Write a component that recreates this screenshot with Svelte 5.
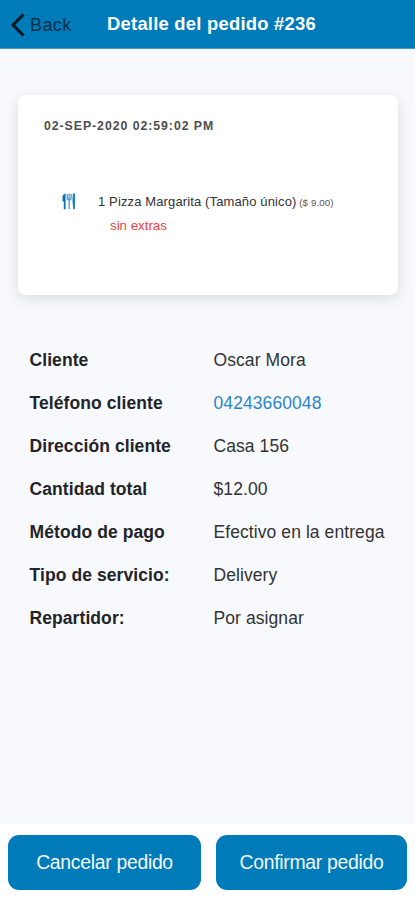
<script lang="ts">
  interface Row {
    label: string;
    value: string;
    href?: string;
  }

  const rows: Row[] = [
    { label: 'Cliente', value: 'Oscar Mora' },
    { label: 'Teléfono cliente', value: '04243660048', href: 'tel:04243660048' },
    { label: 'Dirección cliente', value: 'Casa 156' },
    { label: 'Cantidad total', value: '$12.00' },
    { label: 'Método de pago', value: 'Efectivo en la entrega' },
    { label: 'Tipo de servicio:', value: 'Delivery' },
    { label: 'Repartidor:', value: 'Por asignar' }
  ];
</script>

<div class="screen">
  <header class="header">
    <button class="back" type="button">
      <svg width="14" height="24" viewBox="0 0 14 24" fill="none">
        <path d="M12.5 1.5 L2 12 L12.5 22.5" stroke="currentColor" stroke-width="2.9" />
      </svg>
      <span>Back</span>
    </button>
    <h1>Detalle del pedido #236</h1>
  </header>

  <main class="content">
    <section class="card">
      <p class="date">02-SEP-2020 02:59:02 PM</p>
      <div class="item">
        <!-- Knife, fork and spoon -->
        <svg width="14" height="17" viewBox="0 0 14 17" fill="none">
          <path d="M3.6 0.5 V16.3 H1.8 V8.5 H0.5 V3.5 Q0.7 1 3.6 0.5 Z" fill="#0b72b5" />
          <path d="M5.3 1 V5 Q5.3 7 7.2 7 Q9.1 7 9.1 5 V1 M7.2 0.5 V16.3" stroke="#4b9bd0" stroke-width="1.3" />
          <path d="M10.9 0.5 H13.1 V7.5 L12.9 16.3 H11.2 L10.4 7 Z" fill="#2380bf" />
        </svg>
        <div class="item-text">
          <p class="name">1 Pizza Margarita (Tamaño único) <small>($ 9.00)</small></p>
          <p class="extras">sin extras</p>
        </div>
      </div>
    </section>

    <dl class="details">
      {#each rows as row}
        <dt>{row.label}</dt>
        <dd>
          {#if row.href}
            <a href={row.href}>{row.value}</a>
          {:else}
            {row.value}
          {/if}
        </dd>
      {/each}
    </dl>
  </main>

  <footer class="actions">
    <button type="button">Cancelar pedido</button>
    <button type="button">Confirmar pedido</button>
  </footer>
</div>

<style>
  .screen {
    display: flex;
    flex-direction: column;
    height: 900px;
    overflow: hidden;
    background: #f8f9fd;
    color: #222428;
    font-family: 'Liberation Sans', Arial, sans-serif;
  }

  p,
  h1,
  dl,
  dd {
    margin: 0;
  }

  button {
    border: 0;
    font-family: inherit;
  }

  .header {
    display: grid;
    grid-template-columns: 96px 1fr 88px;
    align-items: center;
    box-sizing: border-box;
    height: 49px;
    border-bottom: 1px solid #4c94c4;
    background: #007bb9;
  }

  .back {
    display: flex;
    align-items: center;
    gap: 5px;
    padding: 2px 0 0 11px;
    background: none;
    color: #06141e;
    font-size: 18px;
  }

  .back span {
    color: #042f4b;
    letter-spacing: 0.4px;
  }

  h1 {
    color: #fff;
    font-size: 18.4px;
    font-weight: 700;
    letter-spacing: 0.24px;
    text-align: center;
    white-space: nowrap;
  }

  .content {
    flex: 1;
    padding: 46px 17px 0 18px;
  }

  .card {
    box-sizing: border-box;
    height: 200px;
    padding: 23px 26px;
    border-radius: 8px;
    background: #fff;
    box-shadow: 0 4px 14px rgba(0, 0, 0, 0.12);
  }

  .date {
    color: #4d4d4d;
    font-size: 12.3px;
    font-weight: 700;
    line-height: 16px;
    letter-spacing: 0.95px;
  }

  .item {
    display: flex;
    gap: 22px;
    padding: 59px 0 0 18px;
  }

  .name {
    color: #333;
    font-size: 13px;
    line-height: 18px;
    letter-spacing: 0.13px;
    white-space: nowrap;
  }

  .name small {
    margin-left: -1px;
    color: #555;
    font-size: 9.7px;
  }

  .extras {
    padding: 5px 0 0 12px;
    color: #ee3f43;
    font-size: 13.3px;
    line-height: 18px;
  }

  .details {
    display: grid;
    grid-template-columns: 184px 1fr;
    grid-auto-rows: 43px;
    align-items: center;
    padding: 44px 0 0 11.5px;
    font-size: 17.5px;
    letter-spacing: 0.08px;
    white-space: nowrap;
  }

  dt {
    font-weight: 700;
  }

  dd {
    color: #333;
  }

  a {
    color: #2a86c8;
    text-decoration: none;
  }

  .actions {
    display: grid;
    grid-template-columns: 193px 191px;
    gap: 15px;
    box-sizing: border-box;
    height: 76px;
    padding: 11px 8px 10px;
    background: #fff;
  }

  .actions button {
    padding: 0;
    border-radius: 11px;
    background: #007bb9;
    color: #f2f8fc;
    font-size: 19.4px;
    letter-spacing: -0.3px;
  }
</style>
